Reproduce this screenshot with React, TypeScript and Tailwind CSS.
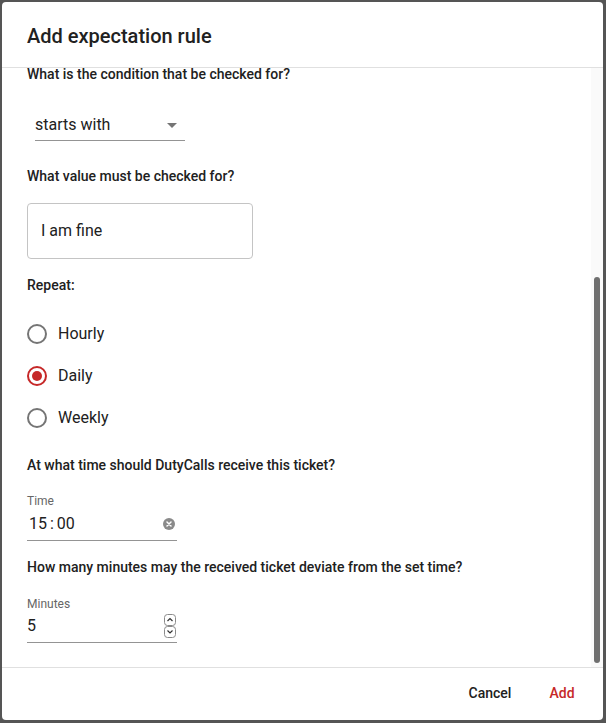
const font = { fontFamily: "Roboto, 'Liberation Sans', sans-serif" }

// Small question heading used above each field
function Question({ children, className = "" }: { children: React.ReactNode; className?: string }) {
  return <p className={`text-[14px] leading-[20px] font-medium text-[#212121] ${className}`}>{children}</p>
}

function SelectField({ value, className = "" }: { value: string; className?: string }) {
  return (
    <div className={`ml-[8px] w-[150px] flex items-center justify-between pt-[4px] pb-[3px] border-b border-[#949494] ${className}`}>
      <span className="text-[16px] leading-[24px] text-[#212121]">{value}</span>
      <svg width="10" height="5" viewBox="0 0 10 5" className="mr-[8px]">
        <path d="M0 0 L10 0 L5 5 Z" fill="#757575" />
      </svg>
    </div>
  )
}

function OutlinedInput({ value, className = "" }: { value: string; className?: string }) {
  return (
    <div className={`w-[226px] h-[56px] rounded-[4px] border border-[#c4c4c4] flex items-center px-[13px] ${className}`}>
      <span className="text-[16px] leading-[24px] text-[#212121]">{value}</span>
    </div>
  )
}

function Radio({ label, checked }: { label: string; checked?: boolean }) {
  return (
    <div className="h-[42px] flex items-center gap-[11px]">
      <span
        className={`w-[20px] h-[20px] rounded-full border-2 flex items-center justify-center ${
          checked ? "border-[#c62828]" : "border-[#757575]"
        }`}
      >
        {checked && <span className="w-[10px] h-[10px] rounded-full bg-[#c62828]" />}
      </span>
      <span className="text-[16px] leading-[24px] text-[#212121]">{label}</span>
    </div>
  )
}

export default function App() {
  return (
    <div className="w-[606px] h-[723px] bg-[#555555] p-[2px]" style={font}>
      <div className="w-[601px] h-[718px] bg-white rounded-[4px] flex flex-col overflow-hidden">
        <div className="pt-[18px] pb-[15px] px-[25px] border-b border-[#e0e0e0]">
          <h2 className="text-[20px] leading-[32px] font-medium text-[#212121]">Add expectation rule</h2>
        </div>

        <div className="flex-1 flex overflow-hidden">
          <div className="flex-1 pl-[25px] pt-[1px]">
            {/* content is scrolled to the bottom, first question sits right under the header */}
            <p className="text-[14px] leading-[10px] font-medium text-[#212121]">
              What is the condition that be checked for?
            </p>
            <SelectField value="starts with" className="mt-[30px]" />

            <Question className="mt-[25px]">What value must be checked for?</Question>
            <OutlinedInput value="I am fine" className="mt-[17px]" />

            <Question className="mt-[16px]">Repeat:</Question>
            <div className="mt-[18px] flex flex-col">
              <Radio label="Hourly" />
              <Radio label="Daily" checked />
              <Radio label="Weekly" />
            </div>

            <Question className="mt-[16px]">At what time should DutyCalls receive this ticket?</Question>
            <div className="mt-[18px] w-[150px]">
              <p className="text-[12px] leading-[16px] text-[#666666]">Time</p>
              <div className="mt-[3px] pb-[4px] flex items-center justify-between border-b border-[#949494]">
                <span className="text-[16px] leading-[24px] text-[#212121] pl-[2px]">
                  15<span className="mx-[3px]">:</span>00
                </span>
                <svg width="12" height="12" viewBox="0 0 12 12" className="mr-[2px]">
                  <circle cx="6" cy="6" r="6" fill="#8a8a8a" />
                  <path d="M4 4 L8 8 M8 4 L4 8" stroke="#fff" strokeWidth="1.5" strokeLinecap="round" />
                </svg>
              </div>
            </div>

            <Question className="mt-[16px]">How many minutes may the received ticket deviate from the set time?</Question>
            <div className="mt-[19px] w-[150px]">
              <p className="text-[12px] leading-[16px] text-[#666666]">Minutes</p>
              <div className="mt-[2px] pb-[4px] flex items-center justify-between border-b border-[#949494]">
                <span className="text-[16px] leading-[24px] text-[#212121]">5</span>
                <svg width="12" height="24" viewBox="0 0 12 24" className="mr-[1px]">
                  <rect x="0.5" y="0.5" width="11" height="11" rx="3" fill="#fff" stroke="#8a8a8a" />
                  <path d="M3.5 7 L6 4.5 L8.5 7" stroke="#333" strokeWidth="1.2" fill="none" />
                  <rect x="0.5" y="12.5" width="11" height="11" rx="3" fill="#fff" stroke="#8a8a8a" />
                  <path d="M3.5 16.5 L6 19 L8.5 16.5" stroke="#333" strokeWidth="1.2" fill="none" />
                </svg>
              </div>
            </div>
          </div>

          {/* scrollbar track */}
          <div className="w-[12px] bg-[#fafafa] flex flex-col justify-end px-[3px] pb-[4px]">
            <div className="h-[386px] rounded-full bg-[#6f6f6f]" />
          </div>
        </div>

        <div className="border-t border-[#e0e0e0] h-[53px] pb-[3px] flex items-center justify-end gap-[8px] pr-[9px]">
          <button className="min-w-[64px] px-[8px] py-[6px] text-[14px] leading-[24px] font-medium text-[#212121]">
            Cancel
          </button>
          <button className="min-w-[64px] px-[8px] py-[6px] text-[14px] leading-[24px] font-medium text-[#c62828]">
            Add
          </button>
        </div>
      </div>
    </div>
  )
}
